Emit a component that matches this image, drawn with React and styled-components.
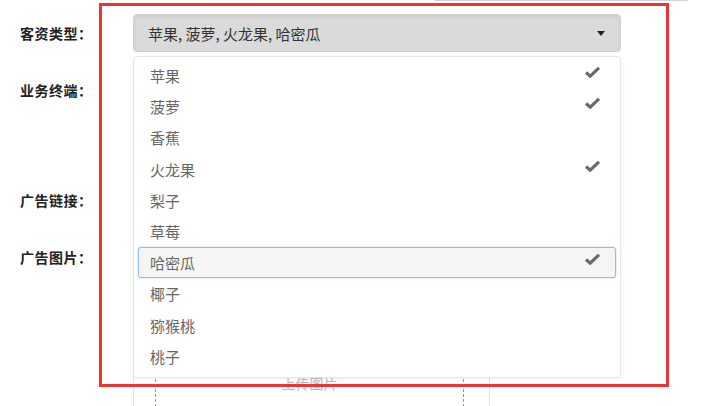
import React from 'react';
import styled, { createGlobalStyle } from 'styled-components';

const GlobalStyle = createGlobalStyle`
    body {
        margin: 0;
        background: #fff;
        font-family: "Noto Sans CJK SC", "Noto Sans", sans-serif;
    }
`;

const Page = styled.div`
    position: relative;
    width: 707px;
    height: 406px;
    overflow: hidden;
`;

const TopRule = styled.div`
    margin-left: 435px;
    width: 253px;
    height: 1px;
    background: #d4d4d4;
`;

const Form = styled.div`
    display: flex;
    flex-direction: column;
    padding-top: 13px;
`;

const Row = styled.div`
    display: flex;
    align-items: flex-start;
    margin-top: ${({ gap }) => `${gap || 0}px`};
`;

const Label = styled.div`
    box-sizing: border-box;
    width: 133px;
    padding-left: 20px;
    height: 38px;
    line-height: 38px;
    font-size: 14px;
    font-weight: 700;
    letter-spacing: 0.5px;
    color: #222;
`;

const Control = styled.div`
    position: relative;
    width: 488px;
    min-height: 38px;
`;

const SelectButton = styled.div`
    box-sizing: border-box;
    display: flex;
    align-items: center;
    justify-content: space-between;
    height: 38px;
    padding: 0 15px 0 14px;
    background: #dadada;
    border: 1px solid #cfcfcf;
    border-radius: 4px;
    box-shadow: inset 0 2px 4px rgba(0, 0, 0, 0.06);
    font-size: 15px;
    color: #333;
`;

const Caret = styled.span`
    width: 0;
    height: 0;
    border-left: 4px solid transparent;
    border-right: 4px solid transparent;
    border-top: 5px solid #222;
`;

const Menu = styled.ul`
    position: absolute;
    z-index: 2;
    top: calc(100% + 4px);
    left: 0;
    right: 0;
    box-sizing: border-box;
    margin: 0;
    padding: 3px 4px 5px;
    list-style: none;
    background: #fff;
    border: 1px solid #e6e6e6;
    border-radius: 4px;
    box-shadow: 0 2px 6px rgba(0, 0, 0, 0.05);
`;

const Item = styled.li`
    box-sizing: border-box;
    display: flex;
    align-items: center;
    justify-content: space-between;
    height: 31.2px;
    padding: 0 15px 0 11px;
    font-size: 15px;
    color: #666;
    border: 1px solid ${({ active }) => active ? '#92bbec' : 'transparent'};
    border-radius: 3px;
    background: ${({ active }) => active ? '#f5f5f5' : 'transparent'};
    box-shadow: ${({ active }) => active ? '0 0 2px rgba(102, 160, 233, 0.5)' : 'none'};
`;

const Check = styled.svg`
    width: 15px;
    height: 12px;
    margin-top: -7px;
    color: #6a6a6a;
`;

const UploadBox = styled.div`
    box-sizing: border-box;
    width: 357px;
    height: 200px;
    padding: 0 25px 0 21px;
    border: 1px solid #e2e2e2;
`;

const DashedArea = styled.div`
    height: 100%;
    display: flex;
    justify-content: center;
    padding-top: 134px;
    box-sizing: border-box;
    border-left: 1px dashed #999;
    border-right: 1px dashed #999;
    font-size: 14px;
    line-height: 20px;
    color: #bbb;
`;

const Highlight = styled.div`
    position: absolute;
    z-index: 3;
    left: 99px;
    top: 3px;
    width: 570px;
    height: 384px;
    box-sizing: border-box;
    border: 3px solid #eb3434;
    pointer-events: none;
`;

const fruits = [
    { name: '苹果', on: true },
    { name: '菠萝', on: true },
    { name: '香蕉' },
    { name: '火龙果', on: true },
    { name: '梨子' },
    { name: '草莓' },
    { name: '哈密瓜', on: true, active: true },
    { name: '椰子' },
    { name: '猕猴桃' },
    { name: '桃子' },
];

const CheckIcon = () => (
    <Check viewBox="0 0 15 12">
        <path d="M1 6.5 L5.2 10.2 L14 1.8" fill="none" stroke="currentColor" strokeWidth="3.2" />
    </Check>
);

const App = () => {
    const picked = fruits.filter(f => f.on).map(f => f.name).join(', ');
    return (
        <Page>
            <GlobalStyle />
            <TopRule />
            <Form>
                <Row>
                    <Label>客资类型：</Label>
                    <Control>
                        <SelectButton>
                            <span>{picked}</span>
                            <Caret />
                        </SelectButton>
                        <Menu>
                            {fruits.map(f => (
                                <Item key={f.name} active={f.active}>
                                    <span>{f.name}</span>
                                    {f.on && <CheckIcon />}
                                </Item>
                            ))}
                        </Menu>
                    </Control>
                </Row>
                <Row gap={19}>
                    <Label>业务终端：</Label>
                    <Control />
                </Row>
                <Row gap={72}>
                    <Label>广告链接：</Label>
                    <Control />
                </Row>
                <Row gap={19}>
                    <Label>广告图片：</Label>
                    <Control>
                        <UploadBox>
                            <DashedArea>上传图片</DashedArea>
                        </UploadBox>
                    </Control>
                </Row>
            </Form>
            <Highlight />
        </Page>
    );
};

export default App;
